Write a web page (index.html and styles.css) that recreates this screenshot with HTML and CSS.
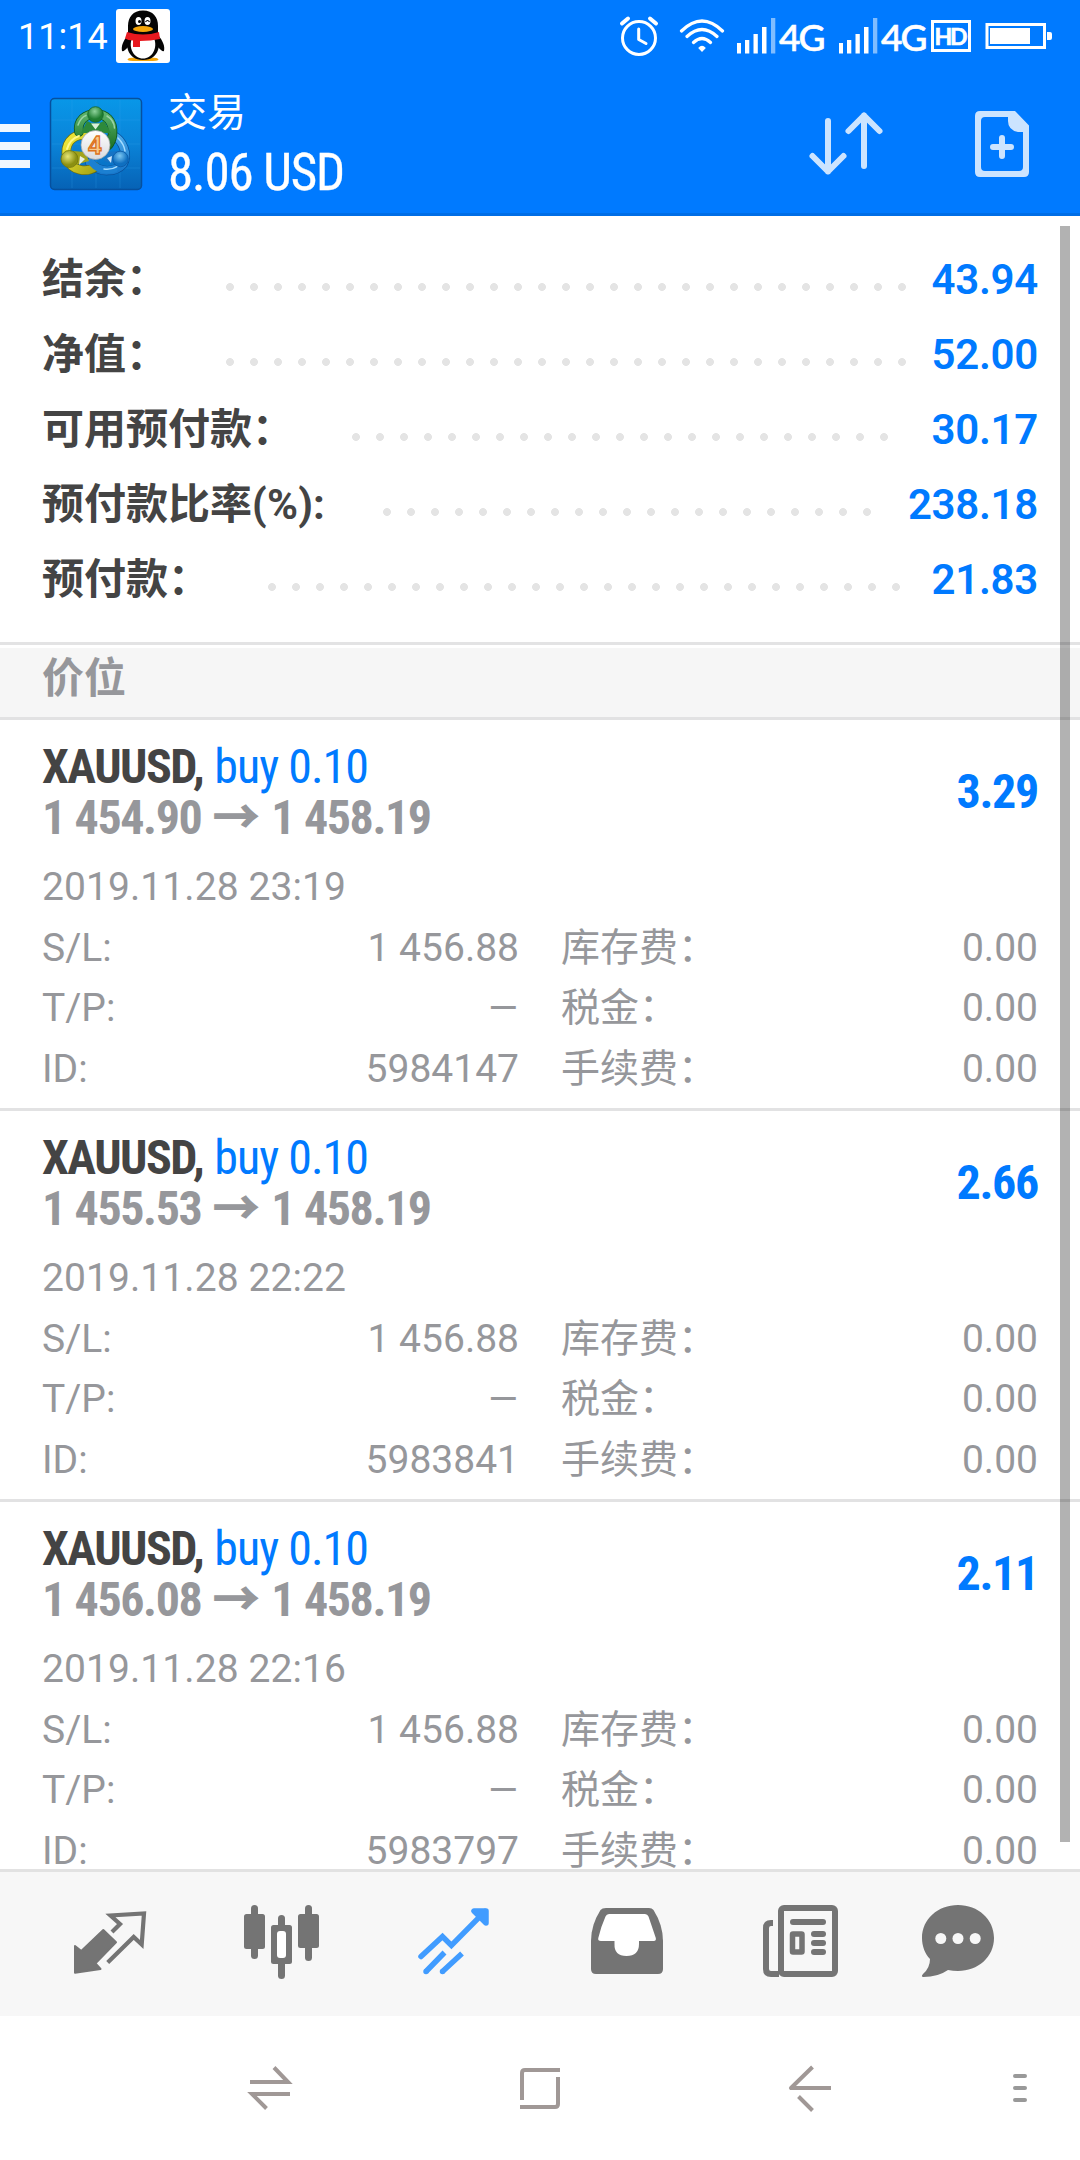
FILE: index.html
```html
<!DOCTYPE html>
<html lang="zh-CN">
<head>
<meta charset="utf-8">
<title>交易</title>
<link rel="stylesheet" href="styles.css">
</head>
<body>
<div class="screen">
  <header class="top">
    <div class="status">
      <span class="clock">11:14</span>
      <svg class="qq" viewBox="0 0 54 54">
        <rect width="54" height="54" rx="3" fill="#fff"/>
        <path d="M20 48.500q-8.500 0-8.500 2t15.500 1.500q15.500.5 15.500-1.500t-8.500-2z" fill="#f5a60a"/>
        <path d="M12 26C7 32 5 37 6 42q2 1 6-4zM42 26c5 6 7 11 6 16q-2 1-6-4z" fill="#050505"/>
        <path d="M27 1.500C17 1.500 12 8 12 17v8c-2 5-2 11 0 16 2 6 7 10 15 10s13-4 15-10c2-5 2-11 0-16v-8C42 8 37 1.500 27 1.500z" fill="#050505"/>
        <path d="M16 29c-4 10 2 20.500 11 20.500S42 39 38 29z" fill="#fff"/>
        <path d="M11 23q16 5 32 0l1 7q-9 2-20 2v6h-7v-6.500q-5 0-8-2z" fill="#e8191f"/>
        <ellipse cx="22.500" cy="12" rx="3" ry="4" fill="#fff"/><ellipse cx="31.500" cy="12" rx="3" ry="4" fill="#fff"/>
        <circle cx="23.500" cy="12.500" r="1.500"/><path d="M29.500 13q2-3 4 0" fill="none" stroke="#000" stroke-width="1.200"/>
        <ellipse cx="27" cy="20" rx="10" ry="3" fill="#f5a60a"/>
      </svg>
      <span class="fill"></span>
      <svg class="alarm" viewBox="619 14 40 44" fill="none" stroke="#fff" stroke-linecap="round">
        <circle cx="639" cy="38" r="16.500" stroke-width="3"/>
        <path d="M638.700 29v10.500l7.300 4" stroke-width="3" stroke-linejoin="round"/>
        <path d="M622 23.500l6-5M650 18.500l6 5" stroke-width="4"/>
      </svg>
      <svg class="wifi" viewBox="679 14 46 44" fill="none" stroke="#fff" stroke-width="3.200" stroke-linecap="round">
        <path d="M681.500 31q20.500-20 41 0M687 36.500q15-14 30 0M693.500 42.500q8.500-8 17 0"/>
        <path d="M702 52l-3.800-4q3.800-4.500 7.600 0z" fill="#fff" stroke="none"/>
      </svg>
      <svg class="bars" viewBox="737 14 39 44" fill="#fff">
        <path d="M737 43h4v10.500h-4zM745 40h4.300v13.500H745zM753.500 34h4.300v19.500h-4.300zM762 27h4.500v26.500H762z"/><path d="M771 18h4.300v35.500H771z" opacity=".5"/>
      </svg>
      <span class="net">4G</span>
      <svg class="bars" viewBox="737 14 39 44" fill="#fff">
        <path d="M737 43h4v10.500h-4zM745 40h4.300v13.500H745zM753.500 34h4.300v19.500h-4.300zM762 27h4.500v26.500H762z"/><path d="M771 18h4.300v35.500H771z" opacity=".5"/>
      </svg>
      <span class="net last">4G</span>
      <span class="hd">HD</span>
      <svg class="battery" viewBox="985 14 68 44">
        <path d="M987 24.500h57.500v23H987z" fill="none" stroke="#fff" stroke-width="3"/><path d="M990 28h40v16h-40zM1047 32h3q2 0 2 2v4q0 2-2 2h-3z" fill="#fff"/>
      </svg>
    </div>
    <div class="appbar">
      <div class="burger"><i></i><i></i><i></i></div>
      <svg class="logo" viewBox="0 0 104 104">
        <defs>
          <linearGradient id="bg" x2="0" y2="1"><stop offset="0" stop-color="#0897e8"/><stop offset=".5" stop-color="#0a83d8"/><stop offset="1" stop-color="#0662b5"/></linearGradient>
          <linearGradient id="green" x2="0" y2="1"><stop offset="0" stop-color="#5cb36a"/><stop offset="1" stop-color="#1e7427"/></linearGradient>
          <linearGradient id="yellow" x2="1" y2="1"><stop offset="0" stop-color="#f2ea3a"/><stop offset="1" stop-color="#a8a614"/></linearGradient>
          <linearGradient id="blue" x2="0" y2="1"><stop offset="0" stop-color="#4aa8e8"/><stop offset="1" stop-color="#1878cc"/></linearGradient>
          <linearGradient id="coin" x2="0" y2="1"><stop offset="0" stop-color="#fff"/><stop offset="1" stop-color="#d9dade"/></linearGradient>
          <radialGradient id="headG" cx=".45" cy=".3"><stop offset="0" stop-color="#8ed39b"/><stop offset="1" stop-color="#1f7d30"/></radialGradient>
          <radialGradient id="headY" cx=".4" cy=".35"><stop offset="0" stop-color="#e6e676"/><stop offset="1" stop-color="#8c9012"/></radialGradient>
          <radialGradient id="headB" cx=".45" cy=".3"><stop offset="0" stop-color="#7cc7f2"/><stop offset="1" stop-color="#0f6fc0"/></radialGradient>
        </defs>
        <rect x="6.500" y="6.500" width="91" height="91" rx="4" fill="url(#bg)" stroke="#06509e" stroke-width="1.500"/>
        <path d="M28 8v88M52 8v88M76 8v88M8 28h88M8 52h88M8 76h88" stroke="#35a6f0" stroke-width=".6" opacity=".4"/>
        <g fill="none" stroke-linecap="round">
          <path d="M46 71C56 82 72 80 79 72 85 62 78 48 70 44" stroke="#07519c" stroke-width="9.500"/>
          <path d="M46 71C56 82 72 80 79 72 85 62 78 48 70 44" stroke="url(#blue)" stroke-width="8"/>
          <path d="M41 43C27 42 20 53 23 66 27 79 43 81 51 75" stroke="#6c6f12" stroke-width="9.500"/>
          <path d="M41 43C27 42 20 53 23 66 27 79 43 81 51 75" stroke="url(#yellow)" stroke-width="8"/>
          <path d="M48 71C54 78 62 79 70 77" stroke="#1c80d2" stroke-width="7"/>
          <path d="M35 40C33 28 42 22 51.500 22S70 28 68.500 43q-1 7-5 11" stroke="#0d5519" stroke-width="9.500"/>
          <path d="M35 40C33 28 42 22 51.500 22S70 28 68.500 43q-1 7-5 11" stroke="url(#green)" stroke-width="8"/>
          <path d="M34 33Q37 25 42 23.500M63 24q7 4 7.500 12" stroke="#9bd3a2" stroke-width="1.500"/>
          <path d="M23 57q3-10 12-13" stroke="#fff889" stroke-width="2"/>
          <path d="M74 46q6 6 7 13M60 77q8 1 14-3" stroke="#a5dcff" stroke-width="1.500"/>
        </g>
        <path d="M43 29q8 5 17 0l7 12H37z" fill="#2d8a3b"/><path d="M47 31.500h9l-4.500 6z" fill="#d9f0d8"/>
        <path d="M29 59l12 1 4 9-14 4z" fill="#a2a31b"/><path d="M36 64l5 3-6 6z" fill="#e9f0e2"/>
        <path d="M75 59l-12 1-3 9 14 4z" fill="#1674c5"/><path d="M68 64l-5 2 4 5z" fill="#cfe6fa"/>
        <circle cx="51.500" cy="22.500" r="7.800" fill="url(#headG)" stroke="#13652a" stroke-width=".8"/>
        <circle cx="25.500" cy="67" r="8.500" fill="url(#headY)" stroke="#74770f" stroke-width=".8"/>
        <circle cx="76.500" cy="67" r="7.800" fill="url(#headB)" stroke="#0a58a4" stroke-width=".8"/>
        <circle cx="51.500" cy="53" r="14.500" fill="url(#coin)" stroke="#9a9fa5" stroke-width=".7"/>
        <text x="51" y="62" text-anchor="middle" class="four">4</text>
      </svg>
      <div class="titles"><div class="title">交易</div><div class="total">8.06 USD</div></div>
      <svg class="sort" viewBox="804 104 84 80" fill="none" stroke="#cce4ff" stroke-width="6" stroke-linecap="round" stroke-linejoin="round">
        <path d="M828 121v50.500M812.500 156l15.500 15.500 15.500-15.500M864 166v-50.500M848.500 131l15.500-15.500 15.500 15.500"/>
      </svg>
      <svg class="newdoc" viewBox="972 104 60 80">
        <path fill="#cce4ff" fill-rule="evenodd" d="M980 111h35l14 14.500V172q0 5-5 5h-44q-5 0-5-5v-56q0-5 5-5zM985 117q-4 0-4 4v46q0 4 4 4h34q4 0 4-4v-35h-5q-10-2-10-11v-4z"/>
        <path d="M1002 138v18M993 147h18" stroke="#cce4ff" stroke-width="6" stroke-linecap="round"/>
      </svg>
    </div>
  </header>

  <main class="content">
    <section class="summary">
      <div class="sum"><span>结余：</span><i style="--dots:29"></i><b>43.94</b></div>
      <div class="sum"><span>净值：</span><i style="--dots:29"></i><b>52.00</b></div>
      <div class="sum"><span>可用预付款：</span><i style="--dots:23"></i><b>30.17</b></div>
      <div class="sum"><span>预付款比率<em>(%):</em></span><i style="--dots:21"></i><b>238.18</b></div>
      <div class="sum"><span>预付款：</span><i style="--dots:27"></i><b>21.83</b></div>
    </section>
    <h2 class="section">价位</h2>

    <article class="pos">
      <div class="head"><div><div class="sym"><b>XAUUSD,</b><span>buy 0.10</span></div>
        <div class="price"><span>1 454.90</span><i>→</i><span>1 458.19</span></div></div><div class="profit">3.29</div></div>
      <div class="date">2019.11.28 23:19</div>
      <dl class="grid"><dt>S/L:</dt><dd>1 456.88</dd><dt>库存费：</dt><dd>0.00</dd><dt>T/P:</dt><dd class="none">—</dd><dt>税金：</dt><dd>0.00</dd><dt>ID:</dt><dd>5984147</dd><dt>手续费：</dt><dd>0.00</dd></dl>
    </article>
    <article class="pos">
      <div class="head"><div><div class="sym"><b>XAUUSD,</b><span>buy 0.10</span></div>
        <div class="price"><span>1 455.53</span><i>→</i><span>1 458.19</span></div></div><div class="profit">2.66</div></div>
      <div class="date">2019.11.28 22:22</div>
      <dl class="grid"><dt>S/L:</dt><dd>1 456.88</dd><dt>库存费：</dt><dd>0.00</dd><dt>T/P:</dt><dd class="none">—</dd><dt>税金：</dt><dd>0.00</dd><dt>ID:</dt><dd>5983841</dd><dt>手续费：</dt><dd>0.00</dd></dl>
    </article>
    <article class="pos">
      <div class="head"><div><div class="sym"><b>XAUUSD,</b><span>buy 0.10</span></div>
        <div class="price"><span>1 456.08</span><i>→</i><span>1 458.19</span></div></div><div class="profit">2.11</div></div>
      <div class="date">2019.11.28 22:16</div>
      <dl class="grid"><dt>S/L:</dt><dd>1 456.88</dd><dt>库存费：</dt><dd>0.00</dd><dt>T/P:</dt><dd class="none">—</dd><dt>税金：</dt><dd>0.00</dd><dt>ID:</dt><dd>5983797</dd><dt>手续费：</dt><dd>0.00</dd></dl>
    </article>
    <div class="scrollbar"></div>
  </main>

  <nav class="tabs">
    <svg viewBox="60 1896 96 96">
      <path d="M75 1946l6.300 5 22-21 12.700 12.300-20.500 21 5 5.700-25.500 3.700z" fill="#747474" stroke="#747474" stroke-width="2" stroke-linejoin="round"/>
      <path d="M112 1932l8-8-9.500-8.500 33.500-2-2.300 31-8-7.500-26 25.500" fill="none" stroke="#747474" stroke-width="4.200"/>
    </svg>
    <svg viewBox="233 1896 96 96" fill="#747474">
      <rect x="251" y="1905" width="7" height="54" rx="3.500"/><rect x="244" y="1914" width="21" height="35" rx="2.500"/>
      <rect x="278" y="1915" width="7" height="64" rx="3.500"/><rect x="271" y="1925" width="21" height="39" rx="2.500"/><rect x="277" y="1931" width="9" height="27" rx="3" fill="#fff"/>
      <rect x="305" y="1905" width="7" height="56" rx="3.500"/><rect x="298" y="1914" width="21" height="34" rx="2.500"/>
    </svg>
    <svg viewBox="406 1896 96 96" fill="none" stroke="#419cff" stroke-width="5.500">
      <path d="M421 1956.500l21.500-20 8.900 8.900 33.600-34" stroke-linecap="round"/>
      <path d="M474 1911h12v12l-6-6z" stroke-linejoin="round" fill="#419cff"/>
      <path d="M426 1971.500l18.500-19M442.500 1971.500l19.500-18"/><path d="M426 1971.500h.01M442.500 1971.500h.01" stroke-linecap="round"/>
    </svg>
    <svg viewBox="579 1896 96 96">
      <path fill="#747474" d="M606 1908h43q3 0 4.500 2 9.500 15 9.500 31v28q0 5-5 5h-62q-5 0-5-5v-28q0-16 9.500-31 1.500-2 5.500-2z"/>
      <path fill="#fff" d="M609 1914h36q2.500 0 3.500 2.500l7.300 21.500q.6 3-2 3H639v3q0 12-12.500 12t-12-12v-3H601q-3.500 0-2.700-3 2.500-11 7.200-21.500 1-2.500 3.500-2.500z"/>
    </svg>
    <svg viewBox="752 1896 96 96" fill="#747474">
      <rect x="781" y="1908" width="54" height="66" rx="3" fill="none" stroke="#747474" stroke-width="6"/>
      <path d="M773 1923h-2q-5 0-5 5v41q0 5 5 5h8" fill="none" stroke="#747474" stroke-width="6"/>
      <rect x="790" y="1919" width="36" height="6" rx="3"/><rect x="811" y="1931" width="15" height="6" rx="3"/><rect x="811" y="1940" width="15" height="6" rx="3"/><rect x="811" y="1949" width="15" height="6" rx="3"/>
      <rect x="792.500" y="1934" width="9.500" height="18" rx=".5" fill="none" stroke="#747474" stroke-width="5.500"/>
    </svg>
    <svg viewBox="910 1896 96 96">
      <path fill="#747474" d="M958 1905c20 0 36 14 36 33s-16 33-36 33q-5 0-10-1-10 7-24.500 7-3 0-.5-3 7-6 7-15c-5-5-8-13-8-21 0-19 16-33 36-33z"/>
      <g fill="#f7f7f7"><circle cx="940.800" cy="1938.500" r="5.500"/><circle cx="958" cy="1938.500" r="5.500"/><circle cx="975.200" cy="1938.500" r="5.500"/></g>
    </svg>
  </nav>

  <footer class="keys">
    <svg viewBox="240 2058 60 60" fill="none" stroke="#a09896" stroke-width="4"><path d="M250 2082h38l-14-14.500M290 2094h-38l14.500 14.500"/></svg>
    <svg viewBox="510 2058 60 60" fill="none" stroke="#a09896" stroke-width="4"><path d="M522 2100v-27q0-3 3-3h35M520 2107h35q3 0 3-3v-27"/></svg>
    <svg viewBox="780 2058 60 60" fill="none" stroke="#a09896" stroke-width="4" stroke-linejoin="round"><path d="M812.500 2067l-21.500 21h40M798.500 2096.500l14 14"/></svg>
    <svg class="more" viewBox="990 2058 60 60" fill="none" stroke="#999" stroke-width="4" stroke-linecap="round"><path d="M1015 2076h10M1015 2088h10M1015 2100h10"/></svg>
  </footer>
</div>
</body>
</html>
```
FILE: styles.css
```css
* { box-sizing: border-box; margin: 0; padding: 0; }
i, em { font-style: normal; }
svg { display: block; flex: none; }
body { width: 1080px; background: #fff; font-family: Roboto, "Noto Sans CJK SC", sans-serif; white-space: nowrap; }
.screen { display: flex; flex-direction: column; width: 1080px; height: 2160px; overflow: hidden; }

.top { height: 216px; flex: none; background: #007aff; border-bottom: 3px solid #006ee6; color: #fff; }
.status { display: flex; align-items: center; height: 72px; padding: 0 27px 0 18px; }
.clock { width: 98px; padding-top: 2px; font-size: 36px; line-height: 72px; }
.qq { width: 54px; height: 54px; }
.fill { flex: 1; }
.alarm { width: 40px; height: 44px; margin-right: 20px; }
.wifi { width: 46px; height: 44px; margin-right: 12px; }
.bars { width: 39px; height: 44px; }
.net { width: 63px; padding: 1px 0 0 3px; font: 500 37px/44px Lato, sans-serif; letter-spacing: -2px; -webkit-text-stroke: .6px #fff; }
.net.last { width: 53px; }
.hd { width: 40px; height: 32px; margin: 0 14px 0 0; border: 3px solid #fff; font: 700 23px/26px Lato, sans-serif; letter-spacing: -2px; text-align: center; text-indent: -2px; -webkit-text-stroke: .6px #fff; }
.battery { width: 68px; height: 44px; }

.appbar { display: flex; align-items: flex-start; height: 141px; }
.burger { display: grid; gap: 10px; width: 30px; margin: 52px 14px 0 0; }
.burger i { height: 8px; background: #f0f7ff; }
.logo { width: 104px; height: 104px; margin-top: 20px; }
.four { font: 700 27px "Liberation Serif", serif; fill: #f8c98a; stroke: #dd721c; stroke-width: 1.3px; }
.titles { flex: 1; padding: 11px 0 0 20px; }
.title { font-size: 39px; line-height: 60px; }
.total { font: 51px/60px "Roboto Condensed", Roboto, sans-serif; letter-spacing: -1.1px; -webkit-text-stroke: .3px #fff; }
.sort { width: 84px; height: 80px; margin: 32px 84px 0 0; }
.newdoc { width: 60px; height: 80px; margin: 32px 48px 0 0; }

.content { position: relative; height: 1653px; flex: none; overflow: hidden; }
.summary { height: 429px; padding: 26px 42px 0; border-bottom: 3px solid #e3e3e4; }
.sum { display: flex; height: 75px; font-size: 42px; font-weight: 700; line-height: 75px; color: #444; }
.sum i { width: calc(var(--dots) * 24px); height: 24px; margin: 33px auto 0 50px; background: radial-gradient(circle, #e4e4e4 3.600px, transparent 4.200px) 0 0 / 24px 24px; }
.sum b { color: #007aff; font-weight: 650; letter-spacing: -.3px; }
.sum em { letter-spacing: .2px; }
.section { height: 72px; margin-top: 3px; padding-left: 42px; background: #f6f6f6; border-bottom: 3px solid #e2e2e3; font-size: 42px; line-height: 61px; color: #96979b; }

.pos { height: 391px; padding: 21px 42px 0; border-bottom: 3px solid #e2e2e3; color: #96979b; font-size: 39px; line-height: 60.600px; }
.head { display: flex; justify-content: space-between; margin-bottom: 14px; font: 48px/51px "Roboto Condensed", Roboto, sans-serif; }
.sym, .price { display: flex; height: 51px; }
.sym b { color: #444; letter-spacing: -1.500px; margin-right: 11px; }
.sym span { color: #007aff; letter-spacing: -1px; }
.price { font-weight: 700; }
.price span { letter-spacing: -1.400px; }
.price i { width: 48px; margin: 0 11px; font-family: "Noto Sans CJK SC", sans-serif; font-weight: 900; line-height: 43px; }
.profit { font-weight: 700; line-height: 102px; color: #007aff; letter-spacing: -1.300px; }
.date { letter-spacing: .08px; }
.grid { display: grid; grid-template-columns: 150px 327px 242px 277px; }
.grid dt:nth-of-type(even) { padding-left: 42px; }
.grid dd { text-align: right; }
.grid .none { font-size: 38px; padding-right: 1px; }

.scrollbar { position: absolute; top: 10px; right: 10px; width: 10px; height: 1616px; background: rgba(0, 0, 0, .3); }

.tabs { display: flex; gap: 77px; height: 147px; flex: none; padding: 24px 0 0 60px; background: #f7f7f7; border-top: 3px solid #e2e2e2; }
.tabs svg { width: 96px; height: 96px; }
.tabs svg:last-child { margin-left: -15px; }
.keys { display: flex; align-items: center; gap: 210px; flex: 1; padding-left: 240px; }
.keys svg { width: 60px; height: 60px; }
.keys .more { margin-left: -60px; }
```
